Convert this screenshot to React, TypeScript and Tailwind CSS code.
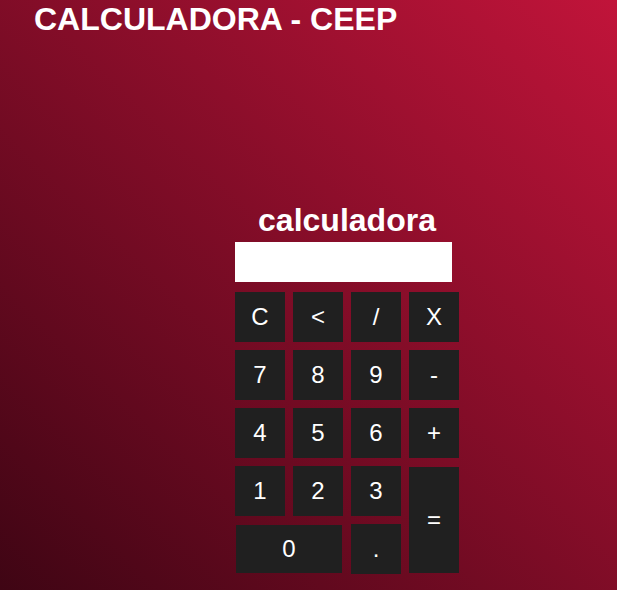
import React from 'react';

const keys: { label: string; cls?: string }[] = [
  { label: 'C' },
  { label: '<' },
  { label: '/' },
  { label: 'X' },
  { label: '7' },
  { label: '8' },
  { label: '9' },
  { label: '-' },
  { label: '4' },
  { label: '5' },
  { label: '6' },
  { label: '+' },
  { label: '1' },
  { label: '2' },
  { label: '3' },
  { label: '=', cls: 'row-span-2 my-[1px]' },
  { label: '0', cls: 'col-span-2 m-[1px]' },
  { label: '.' },
];

export default function App() {
  return (
    <div className="min-h-screen w-full bg-[linear-gradient(to_top_right,#3f0514,#c1143a)] font-['Liberation_Sans',Arial,sans-serif] text-white">
      <h1 className="ml-[34px] pt-[1px] text-[32px] font-bold leading-[normal]">CALCULADORA - CEEP</h1>
      <div className="ml-[235px] mt-[164px] w-[224px]">
        <h2 className="text-center text-[32px] font-bold leading-[normal]">calculadora</h2>
        <div className="mt-[3px] h-[40px] w-[217px] bg-white" />
        <div className="mt-[10px] grid grid-cols-[repeat(4,50px)] auto-rows-[50px] gap-[8px]">
          {keys.map((k) => (
            <button
              key={k.label}
              className={`flex items-center justify-center bg-[#202020] text-[24px] text-white ${k.cls ?? ''}`}
            >
              {k.label}
            </button>
          ))}
        </div>
      </div>
    </div>
  );
}
